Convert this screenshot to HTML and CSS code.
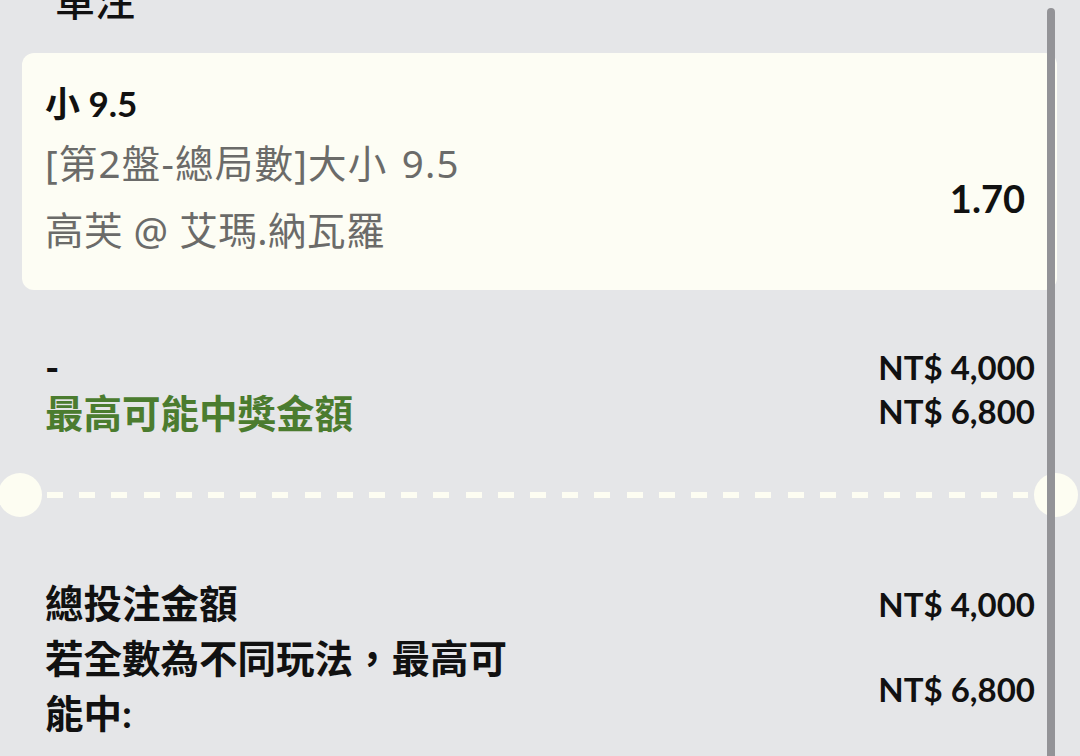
FILE: index.html
```html
<!DOCTYPE html>
<html lang="zh-Hant">
<head>
  <meta charset="UTF-8">
  <meta name="viewport" content="width=device-width, initial-scale=1.0">
  <title>單注</title>
  <link rel="stylesheet" href="styles.css">
</head>
<body>
  <main class="slip">
    <h2 class="slip-title">單注</h2>

    <section class="bet-card">
      <div class="bet-info">
        <div class="bet-pick">小 9.5</div>
        <div class="bet-market">[第2盤-總局數]大小 9.5</div>
        <div class="bet-event">高芙 @ 艾瑪.納瓦羅</div>
      </div>
      <div class="bet-odds">1.70</div>
    </section>

    <section class="stake">
      <div class="stake-row">
        <span class="stake-label">-</span>
        <span class="amount">NT$ 4,000</span>
      </div>
      <div class="stake-row">
        <span class="stake-label win">最高可能中獎金額</span>
        <span class="amount">NT$ 6,800</span>
      </div>
    </section>

    <div class="divider">
      <span class="notch"></span>
      <span class="dashes"></span>
      <span class="notch"></span>
    </div>

    <section class="summary">
      <div class="summary-label">總投注金額</div>
      <div class="amount">NT$ 4,000</div>
      <div class="summary-label">若全數為不同玩法，最高可能中:</div>
      <div class="amount">NT$ 6,800</div>
    </section>
  </main>

  <div class="scrollbar"></div>
</body>
</html>
```

FILE: styles.css
```css
body {
  margin: 0;
  padding: 0;
  background-color: #e5e6e8;
  font-family: "Lato", "Noto Sans CJK TC", sans-serif;
  color: #111;
  overflow: hidden;
}

.slip {
  padding: 0 23px 0 22px;
}

.slip-title {
  margin: -21px 0 0 33px;
  font-size: 40px;
  line-height: 40px;
  font-weight: 500;
  font-family: "Noto Sans CJK TC", sans-serif;
}

.bet-card {
  margin-top: 34px;
  display: flex;
  justify-content: space-between;
  background-color: #fdfdf4;
  border-radius: 12px;
  padding: 28px 32px 34px 23px;
}

.bet-pick {
  font-size: 35px;
  line-height: 44px;
  font-weight: 700;
}

.bet-market,
.bet-event {
  font-family: "Noto Sans", "Noto Sans CJK TC", sans-serif;
  font-size: 38.5px;
  line-height: 52px;
  color: #6b6b69;
}

.bet-market {
  margin-top: 12px;
  letter-spacing: 1.2px;
  word-spacing: 3px;
}

.bet-event {
  margin-top: 15px;
  letter-spacing: 0.5px;
}

.bet-odds {
  align-self: flex-end;
  margin-bottom: 36px;
  font-size: 38px;
  line-height: 44px;
  font-weight: 700;
}

.stake {
  margin-top: 55px;
  padding: 0 22px 0 23px;
}

.stake-row {
  display: flex;
  justify-content: space-between;
  align-items: center;
  height: 44px;
}

.stake-label {
  font-size: 38.5px;
  font-weight: 700;
}

.stake-label.win {
  color: #4b7c2f;
}

.amount {
  font-size: 33px;
  font-weight: 700;
  text-align: right;
}

.divider {
  display: flex;
  align-items: center;
  margin: 40px -22px 0 -23px;
  padding: 0 1px 0 0;
}

.notch {
  width: 44px;
  height: 44px;
  border-radius: 50%;
  background-color: #fdfdf2;
  flex-shrink: 0;
}

.notch:first-child {
  margin-left: -1px;
}

.dashes {
  flex: 1;
  height: 6px;
  margin: 0 6px 0 5px;
  background: repeating-linear-gradient(90deg, #fdfdf2 0 16px, transparent 16px 32.2px);
}

.summary {
  display: grid;
  grid-template-columns: 480px 1fr;
  align-items: center;
  margin-top: 59px;
  padding: 0 22px 0 23px;
}

.summary-label {
  font-size: 38.5px;
  line-height: 55px;
  font-weight: 700;
}

.summary .amount:last-child {
  padding-top: 5px;
}

.scrollbar {
  position: fixed;
  top: 8px;
  bottom: -10px;
  right: 25px;
  width: 8px;
  border-radius: 4px;
  background-color: #939397;
}
```
